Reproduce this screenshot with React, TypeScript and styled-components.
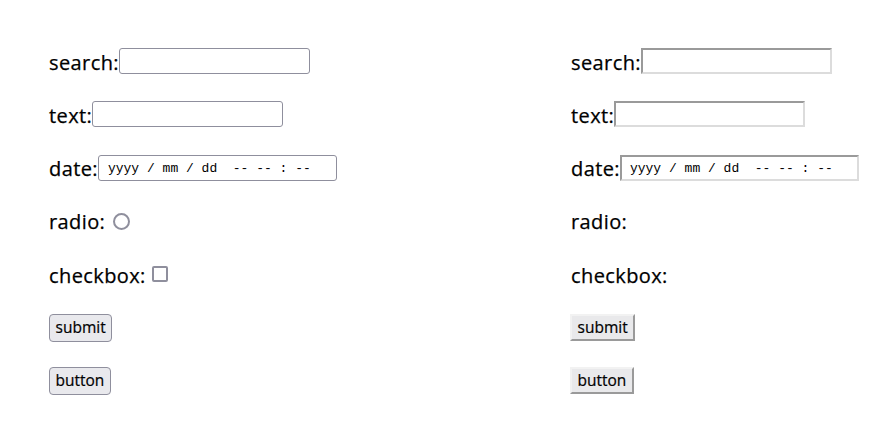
import React from "react";
import styled, { createGlobalStyle, css } from "styled-components";

const Global = createGlobalStyle`
  html, body { margin: 0; padding: 0; background: #ffffff; }
  body { font-family: "Open Sans", "Noto Sans", sans-serif; color: #000; }
`;

const Page = styled.div`
  display: grid;
  grid-template-columns: 522px 1fr;
  padding: 47px 0 0 49px;
`;

const Column = styled.div`
  display: flex;
  flex-direction: column;
  gap: 25.33px;
`;

const Row = styled.div`
  display: flex;
  align-items: center;
  height: 28px;
  font-size: 20px;
  line-height: 28px;
  white-space: pre;
`;

const Label = styled.span`
  letter-spacing: 0.4px;
  padding-top: 3px;
  -webkit-text-stroke: 0.25px #000;
`;

type Variant = { $classic?: boolean };

const fieldBorder = css<Variant>`
  box-sizing: border-box;
  height: 26px;
  background: #fff;
  ${(p) =>
    p.$classic
      ? css`
          border-style: solid;
          border-width: 2px;
          border-color: #9a9a9a #dcdcdc #dcdcdc #9a9a9a;
          border-radius: 0;
        `
      : css`
          border: 1px solid #8f8f9d;
          border-radius: 3px;
        `}
`;

const TextField = styled.input<Variant>`
  ${fieldBorder};
  width: 191px;
  margin: 0;
  padding: 0 3px;
  font: 16px "Open Sans", sans-serif;
  outline: none;
  appearance: none;
`;

const DateField = styled.div<Variant>`
  ${fieldBorder};
  width: 239px;
  display: flex;
  align-items: center;
  padding-left: ${(p) => (p.$classic ? "8px" : "9px")};
  padding-top: 1px;
  font: 13px/1 "Liberation Mono", monospace;
  color: #000;
`;

const Radio = styled.span`
  box-sizing: border-box;
  display: inline-block;
  width: 17px;
  height: 17px;
  border: 2px solid #8f8f9d;
  border-radius: 50%;
  background: #fff;
  margin-left: 2px;
  margin-top: 2px;
`;

const Check = styled.span`
  box-sizing: border-box;
  display: inline-block;
  width: 16px;
  height: 16px;
  border: 2px solid #8f8f9d;
  border-radius: 2px;
  background: #fff;
  margin-left: 1px;
`;

const Button = styled.button<Variant>`
  box-sizing: border-box;
  height: 28px;
  margin: 0;
  padding: 0 5.5px;
  font: 15.5px/1 "Open Sans", sans-serif;
  -webkit-text-stroke: 0.2px #000;
  color: #000;
  cursor: default;
  ${(p) =>
    p.$classic
      ? css`
          background: #e9e9eb;
          border-style: solid;
          border-width: 2px;
          border-color: #f2f2f2 #9a9a9a #9a9a9a #f2f2f2;
          border-radius: 0;
          height: 27px;
          margin-left: -1px;
        `
      : css`
          background: #e9e9ed;
          border: 1px solid #8f8f9d;
          border-radius: 4px;
        `}
`;

function FormColumn({ classic }: { classic?: boolean }) {
  return (
    <Column>
      <Row>
        <Label>search:</Label>
        <TextField type="search" $classic={classic} />
      </Row>
      <Row>
        <Label>text:</Label>
        <TextField type="text" $classic={classic} />
      </Row>
      <Row>
        <Label>date:</Label>
        <DateField $classic={classic}>yyyy / mm / dd  -- -- : --</DateField>
      </Row>
      <Row>
        <Label>radio: </Label>
        {classic ? null : <Radio />}
      </Row>
      <Row>
        <Label>checkbox: </Label>
        {classic ? null : <Check />}
      </Row>
      <Row>
        <Button type="submit" $classic={classic}>submit</Button>
      </Row>
      <Row>
        <Button type="button" $classic={classic}>button</Button>
      </Row>
    </Column>
  );
}

export default function App() {
  return (
    <>
      <Global />
      <Page>
        <FormColumn />
        <FormColumn classic />
      </Page>
    </>
  );
}
